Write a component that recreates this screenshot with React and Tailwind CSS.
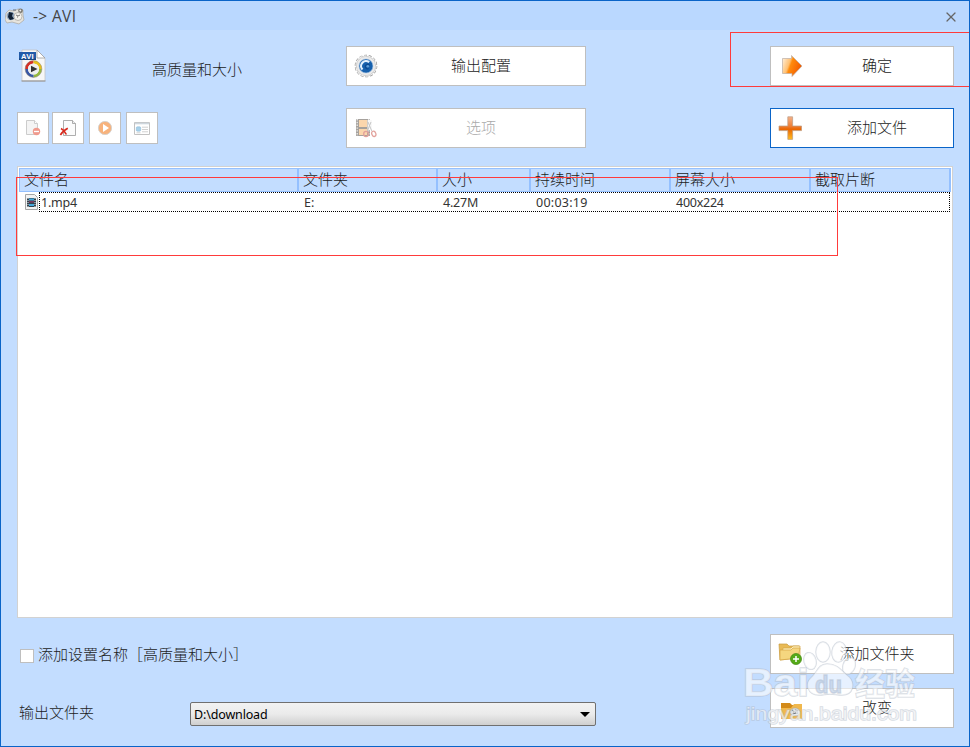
import React, { useState } from 'react';
import { X } from 'lucide-react';

const columns = [
  { id: 'name', label: '文件名', className: 'w-[279px] pl-1' },
  { id: 'folder', label: '文件夹', className: 'w-[139px] pl-1' },
  { id: 'size', label: '大小', className: 'w-[93px] pl-1' },
  { id: 'duration', label: '持续时间', className: 'w-[140px] pl-1' },
  { id: 'screen', label: '屏幕大小', className: 'w-[140px] pl-1' },
  { id: 'clip', label: '截取片断', className: 'w-[140px] pl-1' },
];

const files = [{ name: '1.mp4', folder: 'E:', size: '4.27M', duration: '00:03:19', screen: '400x224' }];

const AppIcon = () => (
  <svg width="20" height="18" viewBox="0 0 20 18">
    <path d="M1 6l3-3 5 1 4-2 5 1v5l1 5-5 4-7-2-5 1-2-3z" fill="#e6e4de" stroke="#aaa69e" strokeWidth=".7" />
    <circle cx="15.5" cy="3.7" r="2.3" fill="#77746c" />
    <circle cx="15.3" cy="3.5" r="1" fill="#eee" />
    <circle cx="5.8" cy="9" r="4.2" fill="#90a5bd" />
    <path d="M4 5l4 1-1 3 2 3-4 1-2-3z" fill="#102034" />
    <circle cx="13" cy="9.5" r="4" fill="#f3f1ec" stroke="#a5a29b" strokeWidth=".7" />
    <path d="M11 8l2 1 2-1M12 10h1M8 3l3 0" fill="none" stroke="#555" strokeWidth=".8" />
  </svg>
);

const AviIcon = () => (
  <svg width="30" height="34" viewBox="0 0 30 34">
    <path d="M4 1h15l8 8v23H4z" fill="#f7f7f7" stroke="#c5c5c5" strokeWidth=".8" />
    <path d="M3.5 32h24" stroke="#8b8b8b" strokeWidth="1" />
    <path d="M19 1l8 8h-8z" fill="#fff" stroke="#9c9c9c" strokeWidth=".8" />
    <path d="M1 3h17v8H1z" fill="#225ba8" />
    <path d="M1 9.5h17V11H1z" fill="#194780" />
    <text x="3" y="9.8" fill="#fff" fontFamily="Liberation Sans, sans-serif" fontSize="7.5" fontWeight="700" textLength="12.5">AVI</text>
    <g fill="none" strokeWidth="2.8">
      <path d="M8.5 20A7 7 0 0 1 15.5 13" stroke="#d52e25" />
      <path d="M15.5 13A7 7 0 0 1 22.5 20" stroke="#e8bf19" />
      <path d="M22.5 20A7 7 0 0 1 15.5 27" stroke="#94b83d" />
      <path d="M15.5 27A7 7 0 0 1 8.5 20" stroke="#3757a6" />
      <circle cx="15.5" cy="20" r="8.4" stroke="#8c8377" strokeWidth=".5" />
    </g>
    <circle cx="15.5" cy="20" r="5.5" fill="#eee" />
    <path d="M13 16.8l6.5 3.2-6.5 3.2z" fill="#333" />
  </svg>
);

const RemoveIcon = () => (
  <svg width="18" height="18" viewBox="0 0 18 18">
    <path d="M2.5 1.5h8l3 3v11h-11z" fill="#f4f4f4" stroke="#ccc" />
    <path d="M10.5 1.5v3h3" fill="#fff" stroke="#ccc" />
    <circle cx="12.5" cy="12.5" r="3.7" fill="#f09a8d" />
    <path d="M10 12.5h5" stroke="#fff" strokeWidth="1.3" />
  </svg>
);

const ClearIcon = () => (
  <svg width="18" height="18" viewBox="0 0 18 18">
    <path d="M4.5 1.5h9l3 3v12h-12z" fill="#fbfbfb" stroke="#999" strokeWidth=".8" />
    <path d="M13.5 1.5v3h3" fill="#eee" stroke="#999" strokeWidth=".8" />
    <path d="M2 9.5c2 1 4.2 3.2 5.4 6M8.8 9.2c-3.4 1.8-5.8 3.8-7.4 6.8" fill="none" stroke="#d92a1e" strokeWidth="1.6" />
  </svg>
);

const PlayIcon = () => (
  <svg width="18" height="18" viewBox="0 0 18 18">
    <circle cx="9" cy="9" r="6.6" fill="#f7b27c" stroke="#d9d2cc" strokeWidth="1" />
    <path d="M7 5l6 4-6 4z" fill="#fff" />
  </svg>
);

const InfoIcon = () => (
  <svg width="18" height="18" viewBox="0 0 18 18">
    <path d="M1.5 3.5h15v12h-15z" fill="#fff" stroke="#c2c2c2" />
    <path d="M2 4.5h14" stroke="#ced6dd" strokeWidth="1.6" />
    <rect x="3.3" y="7.8" width="4.4" height="4.4" rx="1" fill="#a7d1ea" stroke="#86b7d4" strokeWidth=".5" />
    <path d="M9 8.2h6M9 10.5h6M9 12.8h6M3.5 13.8h4" stroke="#ccc" strokeWidth=".9" />
  </svg>
);

const GearIcon = () => (
  <svg width="24" height="24" viewBox="0 0 24 24">
    <circle cx="12" cy="12" r="10.3" fill="none" stroke="#969696" strokeWidth="2" strokeDasharray="2.9 1.73" />
    <circle cx="12" cy="12" r="9.7" fill="#eaeaea" stroke="#aaa" strokeWidth=".5" />
    <circle cx="12" cy="12" r="10.1" fill="none" stroke="#eee" strokeWidth="1.2" strokeDasharray="2.7 1.83" />
    <circle cx="12" cy="12" r="7" fill="#1660ad" stroke="#a5c3e2" strokeWidth=".6" />
    <path d="M8.5 15.6A5 5 0 0 1 15.2 8.2" fill="none" stroke="#e4f1fd" strokeWidth="2.2" />
    <path d="M15.5 11.3a2.2 2.2 0 1 0-.8 3.2" fill="none" stroke="#0c4a91" strokeWidth="1.3" />
    <circle cx="13.8" cy="12.3" r="1.3" fill="#5e9bd4" />
  </svg>
);

const CutIcon = () => (
  <svg width="22" height="20" viewBox="0 0 22 20">
    <path d="M1 1h14v17H1z" fill="#a6a19c" />
    <path d="M4 2h8v7H4zM4 11h8v6H4z" fill="#fbd6ac" />
    <path d="M2.2 1v17M13.8 1v17" stroke="#eee" strokeWidth="1.3" strokeDasharray="1.4 1.4" />
    <path d="M12.5 2h4.5v10h-4.5z" fill="#f8f8f8" />
    <path d="M13 4l4 9.5M16 4l-4 10" stroke="#c6c6c6" strokeWidth="1" />
    <ellipse cx="11" cy="16" rx="2.3" ry="2.6" fill="none" stroke="#e2a19b" strokeWidth="1.3" />
    <ellipse cx="18.8" cy="15.8" rx="2" ry="2.7" fill="none" stroke="#e2a19b" strokeWidth="1.3" transform="rotate(-20 18.8 15.8)" />
  </svg>
);

const ArrowIcon = () => (
  <svg width="22" height="24" viewBox="0 0 22 24">
    <defs>
      <linearGradient id="arrow" x1="0" x2="1" y2=".4">
        <stop stopColor="#fff4e5" />
        <stop offset=".42" stopColor="#ffc072" />
        <stop offset=".52" stopColor="#ff8b0c" />
        <stop offset="1" stopColor="#f45d00" />
      </linearGradient>
    </defs>
    <path d="M1.5 4.5h9V1.5L21 12 11 22.5V19.5H1.5z" fill="url(#arrow)" stroke="#bbaea5" strokeWidth=".7" />
  </svg>
);

const PlusIcon = () => (
  <svg width="24" height="24" viewBox="0 0 24 24">
    <defs>
      <linearGradient id="plus" x2="0" y2="1">
        <stop stopColor="#f5b189" />
        <stop offset=".43" stopColor="#ed7d32" />
        <stop offset=".55" stopColor="#eb6500" />
        <stop offset="1" stopColor="#ffbd20" />
      </linearGradient>
    </defs>
    <path d="M9.8 .8h4.8v9.2h9v4.6h-9v8.8H9.8v-8.8H1V10h8.8z" fill="url(#plus)" stroke="#ba9b83" strokeWidth=".7" />
  </svg>
);

const FolderAddIcon = () => (
  <svg width="24" height="24" viewBox="0 0 24 24">
    <path d="M1 2h8l2 2h10v12l-19 2z" fill="#e9ba55" stroke="#c89c41" strokeWidth=".7" />
    <path d="M5 6h8l2-2h7v11H4z" fill="#fff0b8" stroke="#d3a346" strokeWidth=".7" />
    <path d="M2 8h11l2-2h7l-2 10-18 2z" fill="#f5d67f" stroke="#d5a546" strokeWidth=".7" />
    <circle cx="18" cy="17" r="5.5" fill="#55aa18" stroke="#408810" strokeWidth=".7" />
    <path d="M18 14v6M15 17h6" stroke="#fff" strokeWidth="1.5" />
  </svg>
);

const FolderIcon = () => (
  <svg width="22" height="18" viewBox="0 0 22 18">
    <path d="M0 1h9l2 2h10v14H0z" fill="#d38a18" />
    <path d="M0 6h10l3-4h8v15H0z" fill="#f0b84d" />
    <ellipse cx="14" cy="10" rx="5" ry="4" fill="#e6e7e5" stroke="#aaa492" strokeWidth=".6" />
    <path d="M11 8l2 2M14 8l3 1M12 12l3-1" stroke="#555" strokeWidth="1.2" />
  </svg>
);

const FileIcon = () => (
  <svg width="13" height="16" viewBox="0 0 13 16">
    <path d="M.5.5h9l3 3v12H.5z" fill="#f2f2f2" stroke="#a6a6a6" />
    <path d="M2 4h9v9H2z" fill="#33424d" />
    <path d="M4 4.5h5v2H4zM4 10h5v2H4z" fill="#45a9dc" />
    <path d="M4 7h5v1.7H4z" fill="#78385b" />
    <path d="M3 4v9M10 4v9" stroke="#e0e7ec" strokeDasharray="1 1" />
  </svg>
);

const tools = [
  { id: 'remove', icon: RemoveIcon, className: '' },
  { id: 'clear', icon: ClearIcon, className: 'ml-[3px]' },
  { id: 'play', icon: PlayIcon, className: 'ml-[5px]' },
  { id: 'info', icon: InfoIcon, className: 'ml-[5px]' },
];

const ActionButton = ({ icon, label, className, disabled }) => (
  <button
    disabled={disabled}
    className={`grid h-10 shrink-0 items-center border bg-white text-[15px] leading-none disabled:text-[#aaa] ${className}`}
  >
    <span className="col-start-1 row-start-1 flex w-[38px] justify-center">{icon}</span>
    <span className="col-start-1 row-start-1 pb-0.5 pl-[30px] text-center">{label}</span>
  </button>
);

const Watermark = () => (
  <svg className="pointer-events-none absolute left-[740px] top-[638px]" width="184" height="94" viewBox="0 0 184 94">
    <g fill="#fff" fillOpacity=".6" stroke="#aeb8c6" strokeOpacity=".5" strokeWidth="1.4" paintOrder="stroke">
      <ellipse cx="69" cy="22" rx="6" ry="8.5" transform="rotate(-15 69 22)" />
      <ellipse cx="82" cy="13" rx="7" ry="10" />
      <ellipse cx="98" cy="13" rx="7" ry="10" transform="rotate(8 98 13)" />
      <ellipse cx="108" cy="27" rx="6" ry="8.5" transform="rotate(20 108 27)" />
      <path d="M86 25c-9 0-10 9-16 14-6 5-4 17 8 17 5 0 6-1 11-1s7 1 12 1c12 0 13-12 7-18-7-5-10-13-22-13z" />
      <text x="2" y="57" fontFamily="Liberation Sans, sans-serif" fontSize="39" fontWeight="700" textLength="66" lengthAdjust="spacingAndGlyphs">Bai</text>
      <text x="74" y="54" fontFamily="Liberation Sans, sans-serif" fontSize="24" fontWeight="700" fill="#b5c8e2" textLength="27" lengthAdjust="spacingAndGlyphs">du</text>
      <text x="114" y="56" fontFamily="Noto Sans CJK SC, sans-serif" fontSize="31" fontWeight="700" textLength="60" lengthAdjust="spacingAndGlyphs">经验</text>
      <text x="5" y="81" fontFamily="Liberation Sans, sans-serif" fontSize="19" fontWeight="400" textLength="171" lengthAdjust="spacingAndGlyphs">jingyan.baidu.com</text>
    </g>
  </svg>
);

const App = () => {
  const [addName, setAddName] = useState(false);

  return (
    <div className="relative flex h-[747px] w-[970px] flex-col overflow-hidden border border-[#0a64c8] bg-[#c3ddff] font-['Noto_Sans','Noto_Sans_CJK_SC',sans-serif] text-[15px] font-light text-[#1c1c1c]">
      {/* Title bar */}
      <div className="flex h-[29px] shrink-0 items-center justify-between bg-[#bad8ff] pl-1 pr-2.5">
        <div className="flex items-center gap-2">
          <AppIcon />
          <span className="pt-px font-['Open_Sans','Noto_Sans',sans-serif] text-[15.5px] font-normal leading-5 tracking-[0.35px] text-[#444]">-&gt; AVI</span>
        </div>
        <X className="mt-0.5 h-4 w-4 text-[#666]" strokeWidth={1.8} />
      </div>

      {/* Toolbar */}
      <div className="mt-4 flex h-[102px] shrink-0 justify-between pl-4 pr-[15px]">
        <div className="w-[300px]">
          <div className="flex h-[46px] items-center pl-px">
            <div className="mb-1.5"><AviIcon /></div>
            <span className="ml-[104px] leading-none">高质量和大小</span>
          </div>
          <div className="mt-5 flex">
            {tools.map(({ id, icon: Icon, className }) => (
              <button key={id} className={`flex h-8 w-8 items-center justify-center border border-[#bfbfbf] bg-white ${className}`}>
                <Icon />
              </button>
            ))}
          </div>
        </div>
        <div className="ml-[29px] mr-auto flex flex-col gap-[22px]">
          <ActionButton className="w-[240px] border-[#bfbfbf]" icon={<GearIcon />} label="输出配置" />
          <ActionButton className="w-[240px] border-[#bfbfbf]" icon={<CutIcon />} label="选项" disabled />
        </div>
        <div className="flex flex-col gap-[22px]">
          <ActionButton className="w-[184px] border-[#bfbfbf]" icon={<span className="pl-[3px]"><ArrowIcon /></span>} label="确定" />
          <ActionButton className="w-[184px] border-[#0a64c8]" icon={<PlusIcon />} label="添加文件" />
        </div>
      </div>

      {/* File list */}
      <div className="ml-4 mt-[18px] h-[452px] w-[936px] shrink-0 border border-[#d2d2d2] bg-white px-px pt-px">
        <div className="flex h-6 w-[932px] border border-r-0 border-[#94c0ff] bg-[#c3ddff]">
          {columns.map((col) => (
            <div key={col.id} className={`flex shrink-0 items-center border-r-2 border-[#94c0ff] pb-0.5 leading-none ${col.className}`}>
              {col.label}
            </div>
          ))}
        </div>
        {files.map((file) => (
          <div key={file.name} className="flex h-5 font-['Noto_Sans',sans-serif] text-[12.5px] font-normal leading-none text-[#333]">
            <div className="flex w-5 items-center pl-1.5"><FileIcon /></div>
            <div className="flex h-5 w-[911px] items-center border border-dotted border-black pt-0.5">
              <span className="w-[264px] pl-px tracking-[-0.2px]">{file.name}</span>
              <span className="w-[139px]">{file.folder}</span>
              <span className="w-[93px] tracking-[-0.2px]">{file.size}</span>
              <span className="w-[140px] tracking-[0.25px]">{file.duration}</span>
              <span className="tracking-[-0.25px]">{file.screen}</span>
            </div>
          </div>
        ))}
      </div>

      {/* Output options */}
      <div className="mt-4 flex justify-between pl-[18px] pr-[15px]">
        <div>
          <label className="mt-3.5 flex h-4 items-center gap-1 leading-none">
            <input
              type="checkbox"
              checked={addName}
              onChange={(e) => setAddName(e.target.checked)}
              className="ml-px h-3.5 w-3.5 appearance-none border border-[#bfbfbf] bg-white checked:bg-blue-500"
            />
            <span className="pb-[3px]">添加设置名称［高质量和大小］</span>
          </label>
          <div className="mt-[38px] flex h-6 items-center">
            <span className="w-[171px] pb-[3px] leading-none">输出文件夹</span>
            <button className="flex h-6 w-[406px] items-center justify-between rounded-[2px] border border-[#707070] bg-linear-to-b from-[#f2f2f2] from-0% via-[#ebebeb] via-50% to-[#cfcfcf] pl-[3px] pr-[5px] text-[12.5px] font-normal leading-none text-black">
              <span className="pt-0.5 tracking-[-0.15px]">D:\download</span>
              <svg width="10" height="5" viewBox="0 0 10 5"><path d="M0 0h10L5 5z" /></svg>
            </button>
          </div>
        </div>
        <div className="flex flex-col gap-3.5">
          <ActionButton className="w-[184px] border-[#bfbfbf]" icon={<FolderAddIcon />} label="添加文件夹" />
          <ActionButton className="w-[184px] border-[#bfbfbf]" icon={<span className="pl-[3px] pt-1.5"><FolderIcon /></span>} label="改变" />
        </div>
      </div>

      {/* Highlighted areas */}
      <div className="pointer-events-none absolute left-[729px] top-[31px] h-[55px] w-[245px] border border-[#ff3b3b]" />
      <div className="pointer-events-none absolute left-[15px] top-[176px] h-[79px] w-[822px] border border-[#ff3b3b]" />
      <Watermark />
    </div>
  );
};

export default App;
